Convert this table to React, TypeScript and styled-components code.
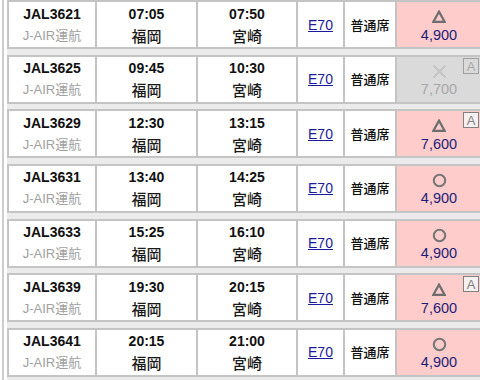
import React from "react";
import styled, { createGlobalStyle } from "styled-components";

type Seat = "few" | "none" | "ok";

interface Flight {
  no: string;
  dep: string;
  arr: string;
  seat: Seat;
  price: string;
  badge?: boolean;
}

const flights: Array<Flight> = [
  { no: "JAL3621", dep: "07:05", arr: "07:50", seat: "few", price: "4,900" },
  { no: "JAL3625", dep: "09:45", arr: "10:30", seat: "none", price: "7,700", badge: true },
  { no: "JAL3629", dep: "12:30", arr: "13:15", seat: "few", price: "7,600", badge: true },
  { no: "JAL3631", dep: "13:40", arr: "14:25", seat: "ok", price: "4,900" },
  { no: "JAL3633", dep: "15:25", arr: "16:10", seat: "ok", price: "4,900" },
  { no: "JAL3639", dep: "19:30", arr: "20:15", seat: "few", price: "7,600", badge: true },
  { no: "JAL3641", dep: "20:15", arr: "21:00", seat: "ok", price: "4,900" },
];

const GlobalStyle = createGlobalStyle`
  html, body {
    margin: 0;
    padding: 0;
    background: #fff;
  }
  body {
    font-family: "Liberation Sans", Arial, "Noto Sans CJK JP", sans-serif;
  }
`;

const Page = styled.div`
  width: 476px;
  height: 380px;
  overflow: hidden;
  margin-left: 2px;
  border-left: 2px solid #cdcdcd;
  padding-left: 3px;
`;

const List = styled.div`
  display: flex;
  flex-direction: column;
  gap: 5.67px;
  background: #ebebeb;
  padding-bottom: 6px;
`;

const Row = styled.div`
  display: grid;
  grid-template-columns: 88px 101px 100px 47px 52px 1fr;
  height: 49px;
  box-sizing: border-box;
  background: #fff;
  border-top: 2px solid #c4c4c4;
  border-bottom: 2px solid #c4c4c4;
  border-left: 2px solid #c4c4c4;
`;

const Cell = styled.div`
  display: flex;
  flex-direction: column;
  align-items: center;
  justify-content: center;
  border-right: 2px solid #c4c4c4;
  line-height: 22px;
`;

const Bold = styled.span`
  font-size: 14px;
  font-weight: bold;
  color: #111;
`;

const Operator = styled.span`
  font-size: 13px;
  color: #a0a0a0;
  font-family: "Liberation Sans", "Noto Sans CJK JP", sans-serif;
`;

const Place = styled.span`
  font-size: 15px;
  font-weight: 500;
  color: #1a1a1a;
  font-family: "Noto Sans CJK JP", sans-serif;
`;

const Equip = styled.a`
  font-size: 14px;
  color: #1a1a9c;
  text-decoration: underline;
  cursor: pointer;
`;

const Class = styled.span`
  font-size: 13px;
  font-weight: 500;
  color: #111;
  font-family: "Noto Sans CJK JP", sans-serif;
`;

const PriceCell = styled(Cell)<{ $off?: boolean }>`
  position: relative;
  background: ${(p) => (p.$off ? "#dadada" : "#ffcccc")};
  line-height: 18px;
  padding-top: 2px;
`;

const Mark = styled.span`
  display: flex;
  height: 18px;
  align-items: center;
  justify-content: center;
`;

const Price = styled.span<{ $off?: boolean }>`
  font-size: 14.5px;
  color: ${(p) => (p.$off ? "#a8a8a8" : "#1c1c78")};
`;

const Badge = styled.span<{ $off?: boolean }>`
  position: absolute;
  top: 1px;
  right: 2px;
  width: 16px;
  height: 16px;
  box-sizing: border-box;
  border: 1px solid ${(p) => (p.$off ? "#a0a0a0" : "#808080")};
  background: ${(p) => (p.$off ? "#dadada" : "#f6f0f0")};
  color: ${(p) => (p.$off ? "#a8a8a8" : "#808080")};
  font-size: 13px;
  line-height: 15px;
  text-align: center;
`;

const SeatMark = ({ seat }: { seat: Seat }) => {
  if (seat === "few") {
    return (
      <svg width="14" height="13" viewBox="0 0 14 13">
        <path d="M7 1.6 L12.6 11.8 L1.4 11.8 Z" fill="none" stroke="#6e6e6e" strokeWidth="2.2" />
      </svg>
    );
  }
  if (seat === "ok") {
    return (
      <svg width="15" height="15" viewBox="0 0 15 15">
        <circle cx="7.5" cy="7.5" r="5.7" fill="none" stroke="#767676" strokeWidth="2.1" />
      </svg>
    );
  }
  return (
    <svg width="15" height="15" viewBox="0 0 15 15">
      <path d="M1.5 1.5 L13.5 13.5 M13.5 1.5 L1.5 13.5" stroke="#c4c4c4" strokeWidth="2" />
    </svg>
  );
};

const FlightRow = ({ flight }: { flight: Flight }) => {
  const off = flight.seat === "none";
  return (
    <Row>
      <Cell>
        <Bold>{flight.no}</Bold>
        <Operator>J-AIR運航</Operator>
      </Cell>
      <Cell>
        <Bold>{flight.dep}</Bold>
        <Place>福岡</Place>
      </Cell>
      <Cell>
        <Bold>{flight.arr}</Bold>
        <Place>宮崎</Place>
      </Cell>
      <Cell>
        <Equip>E70</Equip>
      </Cell>
      <Cell>
        <Class>普通席</Class>
      </Cell>
      <PriceCell $off={off}>
        <Mark>
          <SeatMark seat={flight.seat} />
        </Mark>
        <Price $off={off}>{flight.price}</Price>
        {flight.badge && <Badge $off={off}>A</Badge>}
      </PriceCell>
    </Row>
  );
};

const App = () => (
  <>
    <GlobalStyle />
    <Page>
      <List>
        {flights.map((f) => (
          <FlightRow key={f.no} flight={f} />
        ))}
      </List>
    </Page>
  </>
);

export default App;
